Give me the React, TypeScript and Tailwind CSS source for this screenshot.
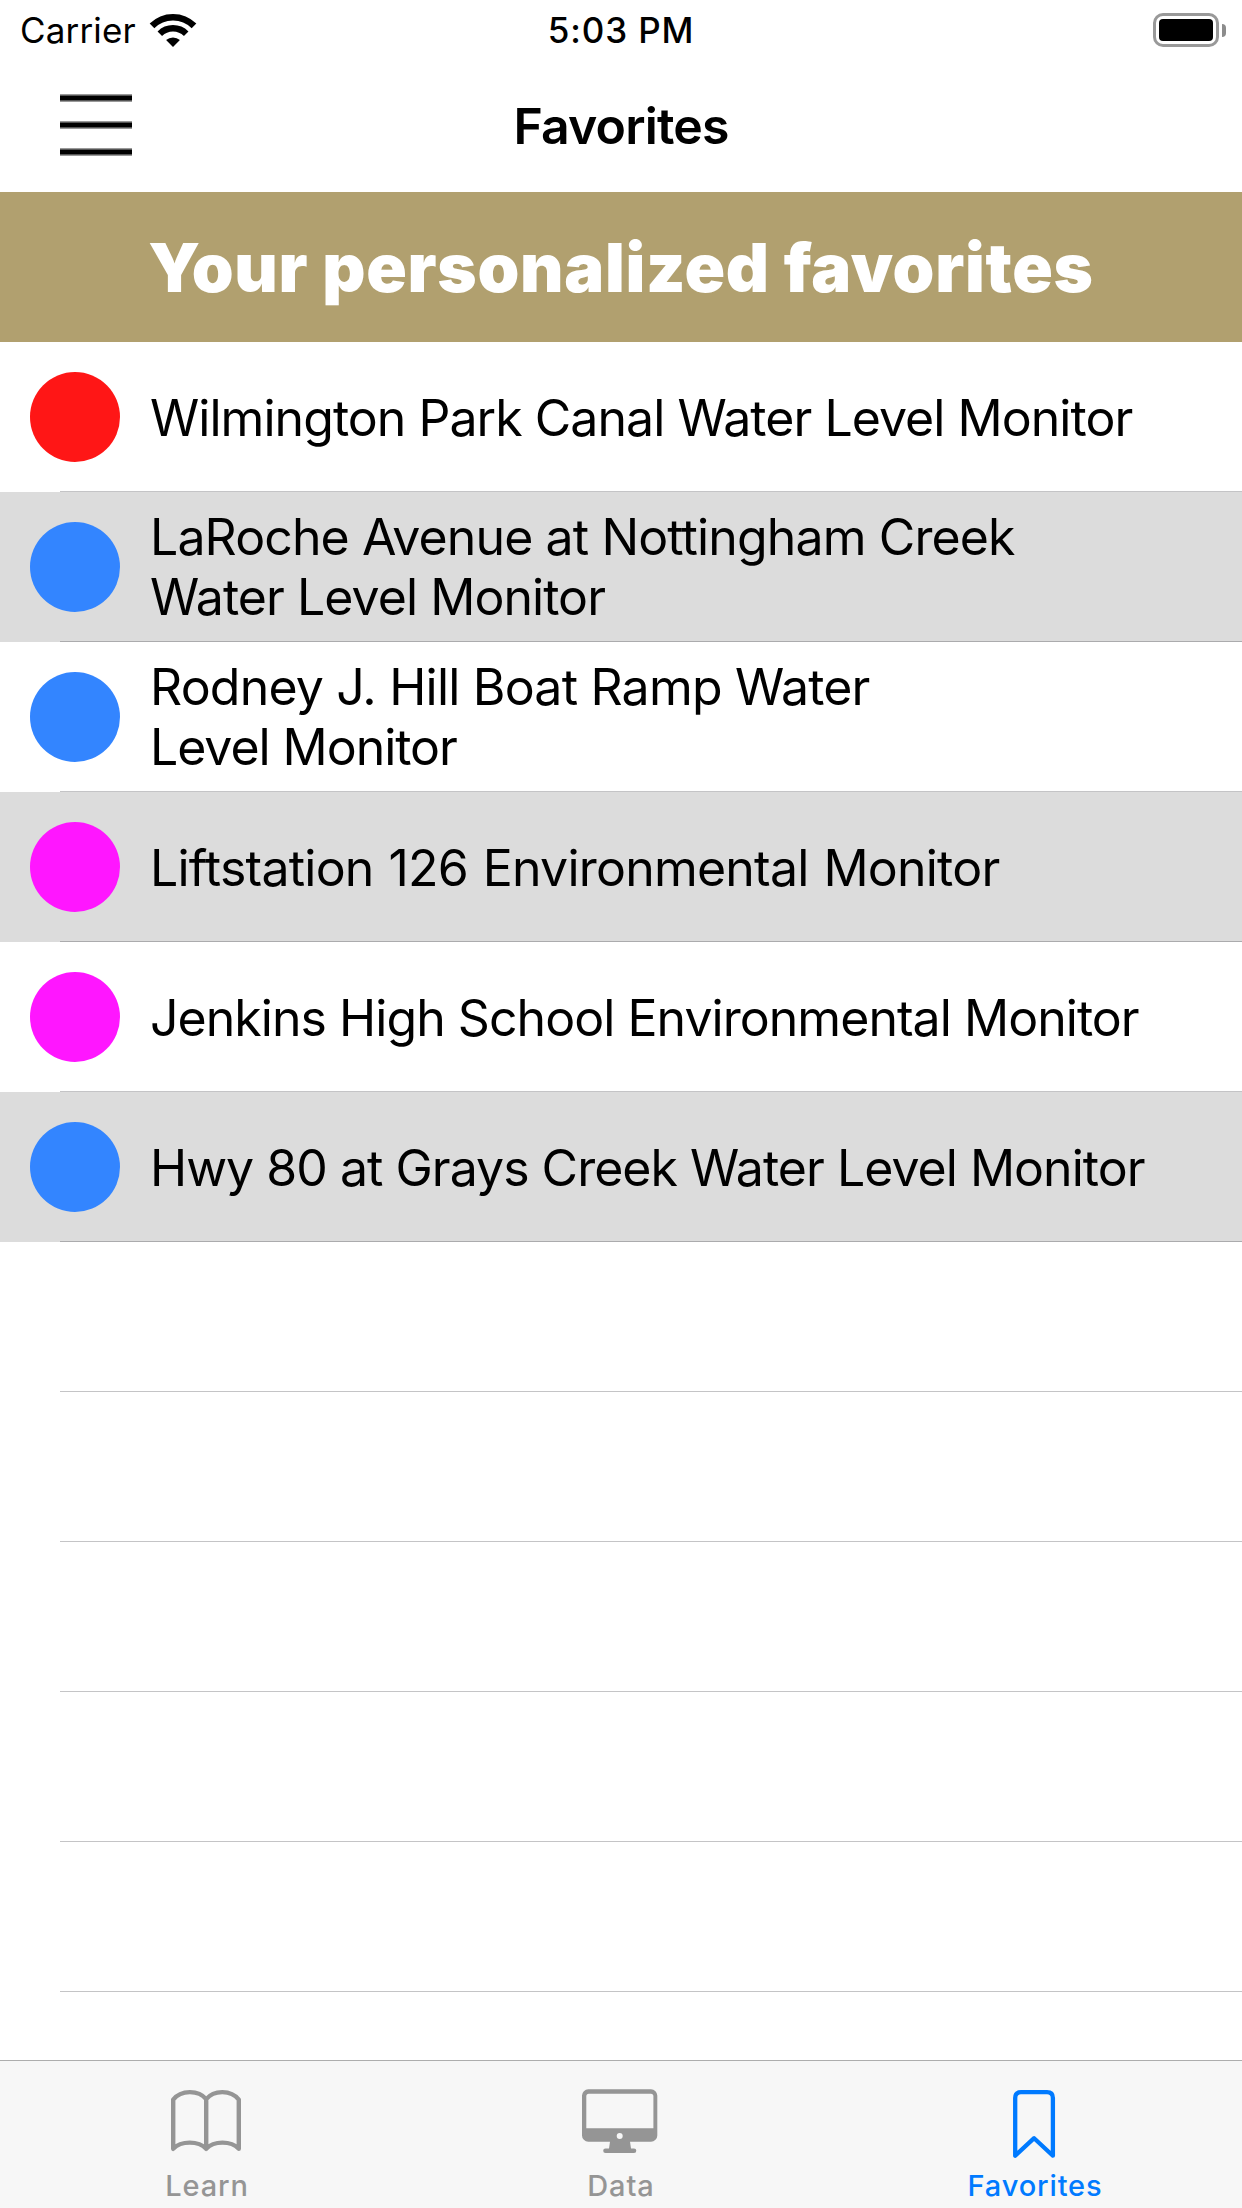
const sites = [
  { dot: 'bg-[#ff1616]', lines: [['Wilmington Park Canal Water Level Monitor', 'tracking-[-0.96px]']] },
  {
    dot: 'bg-[#3385ff]',
    lines: [
      ['LaRoche Avenue at Nottingham Creek', 'tracking-[-0.88px]'],
      ['Water Level Monitor', 'tracking-[-0.95px]'],
    ],
  },
  {
    dot: 'bg-[#3385ff]',
    lines: [
      ['Rodney J. Hill Boat Ramp Water', 'tracking-[-0.8px]'],
      ['Level Monitor', 'tracking-[-1.05px]'],
    ],
  },
  { dot: 'bg-[#ff16ff]', lines: [['Liftstation 126 Environmental Monitor', 'tracking-[-0.77px] [word-spacing:1.5px]']] },
  { dot: 'bg-[#ff16ff]', lines: [['Jenkins High School Environmental Monitor', 'tracking-[-0.96px]']] },
  { dot: 'bg-[#3385ff]', lines: [['Hwy 80 at Grays Creek Water Level Monitor', 'tracking-[-0.98px]']] },
];

function WifiIcon() {
  return (
    <svg className="ml-[13px] h-[36px] w-[48px]" viewBox="0 0 48 36" fill="none">
      <path d="M3 13.9a29.7 29.7 0 0 1 42 0" stroke="#000" strokeWidth="6.6" />
      <path d="M10.8 21.7a18.7 18.7 0 0 1 26.4 0" stroke="#000" strokeWidth="6.4" />
      <path d="M24 35l-6.9-6.9a10.3 10.3 0 0 1 13.8 0z" fill="#000" />
    </svg>
  );
}

function Battery() {
  return (
    <div className="flex items-center">
      <div className="h-[34px] w-[66px] rounded-[10px] border-[3px] border-[#999] p-[3px]">
        <div className="h-full w-full rounded-[4px] bg-black" />
      </div>
      <div className="ml-[3px] h-[13px] w-[4px] rounded-r-full bg-[#8c8c8c]" />
    </div>
  );
}

function MenuBar() {
  return (
    <div className="border-y border-[#999]">
      <div className="h-[6px] border-y border-[#555] bg-black" />
    </div>
  );
}

function BookIcon() {
  return (
    <svg className="h-[74px] w-[80px]" viewBox="0 0 80 74" fill="none" stroke="currentColor" strokeWidth="4.4" strokeLinecap="round" strokeLinejoin="round">
      <path d="M6.2 62.8V13.6C14 3.7 31.5 3.7 39.2 13.2C46.9 3.7 64 3.7 71.8 13.6V62.8C64 54.6 46.9 54.6 39.2 62.8C31.5 54.6 14 54.6 6.2 62.8ZM39.2 13.2V62.8" />
    </svg>
  );
}

function MonitorIcon() {
  return (
    <svg className="h-[74px] w-[80px]" viewBox="0 0 80 74" fill="currentColor">
      <path
        fillRule="evenodd"
        d="M7.3 3.3H70a6.3 6.3 0 0 1 6.3 6.3V49.4a6.3 6.3 0 0 1-6.3 6.3H49L50 62.4H53a2.3 2.3 0 0 1 0 4.6H24.5a2.3 2.3 0 0 1 0-4.6H28L29 55.7H7.3A6.3 6.3 0 0 1 1 49.4V9.6A6.3 6.3 0 0 1 7.3 3.3ZM7.8 7.7A2.5 2.5 0 0 0 5.3 10.2V42.3H72.4V10.2A2.5 2.5 0 0 0 69.9 7.7ZM38.7 47a3 3 0 1 0 0 6a3 3 0 0 0 0-6Z"
      />
    </svg>
  );
}

function BookmarkIcon() {
  return (
    <svg className="h-[74px] w-[80px]" viewBox="0 0 80 74" fill="none" stroke="currentColor" strokeWidth="4.3" strokeLinejoin="round">
      <path d="M20.2 69.7V12Q20.2 6.2 26 6.2H52Q57.9 6.2 57.9 12V69.7L39.1 52.2Z" />
    </svg>
  );
}

const tabs = [
  { label: 'Learn', Icon: BookIcon, color: 'text-[#959595]', text: 'tracking-[0.9px]' },
  { label: 'Data', Icon: MonitorIcon, color: 'text-[#959595]', text: 'tracking-[0.9px]' },
  { label: 'Favorites', Icon: BookmarkIcon, color: 'text-[#007aff]', text: 'tracking-[0.85px]' },
];

export default function App() {
  return (
    <div className="flex h-[2208px] w-[1242px] flex-col overflow-hidden bg-white font-['Inter',sans-serif] text-black">
      <div className="grid h-[60px] grid-cols-3 items-center pr-4 pl-5 text-[35px] leading-[60px]">
        <div className="flex items-center">
          <span className="tracking-[0.15px]">Carrier</span>
          <WifiIcon />
        </div>
        <span className="pr-1 text-center font-medium tracking-[0.85px]">5:03 PM</span>
        <div className="flex justify-end">
          <Battery />
        </div>
      </div>

      <div className="grid h-[132px] grid-cols-[1fr_auto_1fr] items-center">
        <div className="-mt-[3px] ml-[60px] flex w-[72px] flex-col gap-[19px] justify-self-start">
          <MenuBar />
          <MenuBar />
          <MenuBar />
        </div>
        <h1 className="text-[50px] font-semibold tracking-[-0.85px]">Favorites</h1>
      </div>

      <div className="flex h-[150px] items-center justify-center bg-[#b1a06f] pt-[2px] text-[67px] font-black tracking-[0.7px] whitespace-nowrap text-white">
        Your personalized favorites
      </div>

      <ul>
        {sites.map((site, i) => (
          <li key={i} className={i % 2 ? 'bg-[#dcdcdc]' : 'bg-white'}>
            <div className="flex h-[149px] items-center pt-px pl-[30px]">
              <div className={`size-[90px] shrink-0 rounded-full ${site.dot}`} />
              <div className={`ml-[30px] text-[50px] leading-[60px] whitespace-nowrap ${site.lines.length === 1 ? 'pt-[2px]' : ''}`}>
                {site.lines.map(([text, spacing]) => (
                  <div key={text} className={spacing}>{text}</div>
                ))}
              </div>
            </div>
            <div className="ml-[60px] h-px bg-[#3c3c43]/30" />
          </li>
        ))}
        {[0, 1, 2, 3, 4].map((i) => (
          <li key={i} className="ml-[60px] h-[150px] border-b border-[#3c3c43]/30" />
        ))}
      </ul>

      <nav className="mt-auto grid h-[148px] grid-cols-3 border-t border-[#adadad] bg-[#f7f7f7]">
        {tabs.map(({ label, Icon, color, text }) => (
          <div key={label} className={`flex flex-col items-center pt-[25px] ${color}`}>
            <Icon />
            <span className={`mt-[8px] text-[29px] leading-[36px] font-medium ${text}`}>{label}</span>
          </div>
        ))}
      </nav>
    </div>
  );
}
